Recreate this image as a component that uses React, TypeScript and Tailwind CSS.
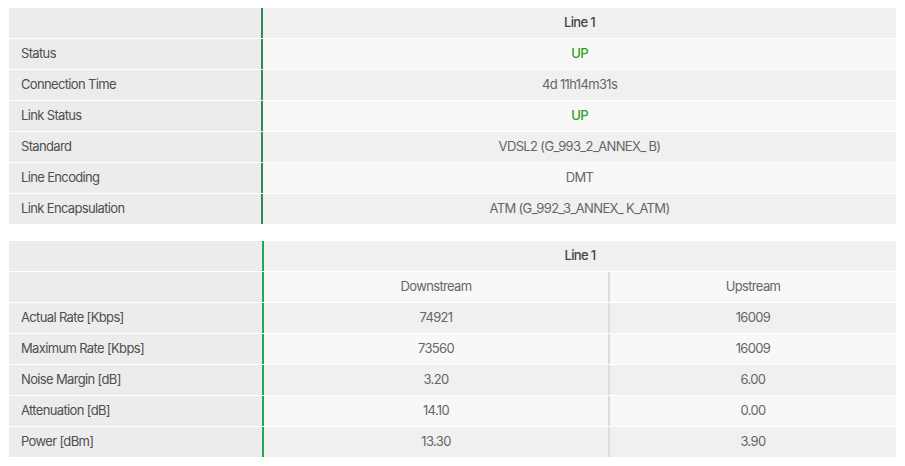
import React from "react";

const font = { fontFamily: "Inter, 'Noto Sans', sans-serif" };

function Row({ label, children, odd, line }: { label: string; children: React.ReactNode; odd: boolean; line: string }) {
  return (
    <div className="flex h-[30px] mt-px first:mt-0">
      <div className="w-[252px] bg-[#ececec] pl-3 pb-px flex items-center text-[#4f4f4f]">{label}</div>
      <div className={`w-[2px] ${line}`} />
      <div className={`flex-1 flex items-center justify-center pb-px ${odd ? "bg-[#f0f0f0]" : "bg-[#f8f8f8]"} text-[#666]`}>{children}</div>
    </div>
  );
}

function Row2({ label, a, b, odd }: { label: string; a: string; b: string; odd: boolean }) {
  const bg = odd ? "bg-[#f0f0f0]" : "bg-[#f8f8f8]";
  return (
    <div className="flex h-[30px] mt-px">
      <div className="w-[253px] bg-[#ececec] pl-3 pb-px flex items-center text-[#4f4f4f]">{label}</div>
      <div className="w-[2px] bg-[#1ea84f]" />
      <div className={`w-[344px] flex items-center justify-center pb-px ${bg} text-[#666]`}>{a}</div>
      <div className="w-[2px] bg-[#dcdcdc]" />
      <div className={`flex-1 flex items-center justify-center pb-px ${bg} text-[#666]`}>{b}</div>
    </div>
  );
}

export default function App() {
  const t1: [string, React.ReactNode][] = [
    ["Status", <span className="text-[#2f9e22] font-medium">UP</span>],
    ["Connection Time", "4d 11h14m31s"],
    ["Link Status", <span className="text-[#2f9e22] font-medium">UP</span>],
    ["Standard", "VDSL2 (G_993_2_ANNEX_ B)"],
    ["Line Encoding", "DMT"],
    ["Link Encapsulation", "ATM (G_992_3_ANNEX_ K_ATM)"],
  ];
  const t2: [string, string, string][] = [
    ["Actual Rate [Kbps]", "74921", "16009"],
    ["Maximum Rate [Kbps]", "73560", "16009"],
    ["Noise Margin [dB]", "3.20", "6.00"],
    ["Attenuation [dB]", "14.10", "0.00"],
    ["Power [dBm]", "13.30", "3.90"],
  ];
  return (
    <div className="bg-white w-[905px] h-[466px] pl-[9px] pt-[8px] text-[13px] tracking-[-0.05em]" style={font}>
      <div className="w-[887px] flex flex-col">
        <div className="flex h-[30px]">
          <div className="w-[252px] bg-[#ececec]" />
          <div className="w-[2px] bg-[#2e8b57]" />
          <div className="flex-1 flex items-center justify-center pb-px bg-[#f0f0f0] text-[#444] font-medium">Line 1</div>
        </div>
        {t1.map(([l, v], i) => (
          <Row key={l} label={l} odd={i % 2 === 1} line="bg-[#2e8b57]">
            {v}
          </Row>
        ))}
      </div>
      <div className="w-[887px] flex flex-col mt-[17px]">
        <div className="flex h-[30px]">
          <div className="w-[253px] bg-[#ececec]" />
          <div className="w-[2px] bg-[#1ea84f]" />
          <div className="flex-1 flex items-center justify-center pb-px bg-[#f0f0f0] text-[#444] font-medium">Line 1</div>
        </div>
        <div className="flex h-[30px] mt-px">
          <div className="w-[253px] bg-[#ececec]" />
          <div className="w-[2px] bg-[#1ea84f]" />
          <div className="w-[344px] flex items-center justify-center pb-px bg-[#f8f8f8] text-[#666]">Downstream</div>
          <div className="w-[2px] bg-[#dcdcdc]" />
          <div className="flex-1 flex items-center justify-center pb-px bg-[#f8f8f8] text-[#666]">Upstream</div>
        </div>
        {t2.map(([l, a, b], i) => (
          <Row2 key={l} label={l} a={a} b={b} odd={i % 2 === 0} />
        ))}
      </div>
    </div>
  );
}
